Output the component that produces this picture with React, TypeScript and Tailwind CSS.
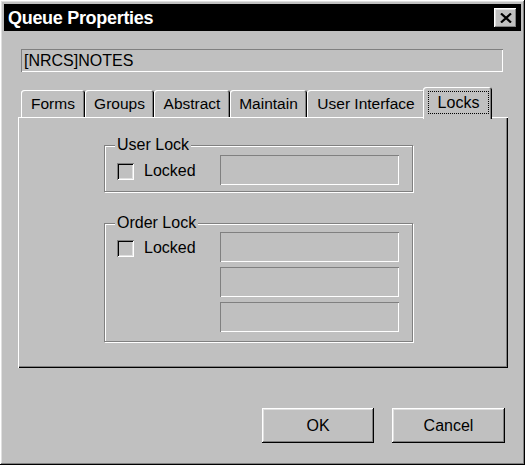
import React from 'react';

const raised =
  'shadow-[inset_-1px_-1px_0_#000,inset_1px_1px_0_#fff,inset_-2px_-2px_0_#808080,inset_2px_2px_0_#dfdfdf]';
const field = 'shadow-[inset_1px_1px_0_#808080,inset_-1px_-1px_0_#fff]';

const tabs = [
  { label: 'Forms', w: 'w-[64px]' },
  { label: 'Groups', w: 'w-[69px]' },
  { label: 'Abstract', w: 'w-[76px]' },
  { label: 'Maintain', w: 'w-[77px]' },
  { label: 'User Interface', w: 'w-[118px]' },
];

const Checkbox = () => (
  <div className="w-[17px] h-[17px] bg-[#c0c0c0] shadow-[inset_1px_1px_0_#808080,inset_-1px_-1px_0_#fff,inset_2px_2px_0_#000,inset_-2px_-2px_0_#dfdfdf]" />
);

const Field = () => <div className={`w-[179px] h-[30px] ${field}`} />;

const GroupBox: React.FC<{ title: string; fields: number; className: string }> = ({ title, fields, className }) => (
  <div className={`relative w-[309px] border border-[#808080] shadow-[inset_1px_1px_0_#fff,1px_1px_0_#fff] ${className}`}>
    <span className="absolute -top-[11px] left-[10px] px-[2px] bg-[#c0c0c0] text-[16px] leading-[20px]">{title}</span>
    <div className="flex pl-[12px]">
      <div className="w-[103px] h-[30px] flex items-center gap-[10px] pt-[2px]">
        <Checkbox />
        <span className="text-[16px] leading-none">Locked</span>
      </div>
      <div className="flex flex-col gap-[5px]">
        {Array.from({ length: fields }).map((_, i) => (
          <Field key={i} />
        ))}
      </div>
    </div>
  </div>
);

export default function App() {
  return (
    <div
      className={`w-[525px] h-[465px] bg-[#c0c0c0] p-[4px] flex flex-col text-black ${raised}`}
      style={{ fontFamily: '"Liberation Sans", Arial, sans-serif' }}
    >
      {/* title bar */}
      <div className="h-[27px] bg-black flex items-center justify-between pl-[4px] pr-[4px]">
        <span className="text-white font-bold text-[18px] tracking-[-0.3px] leading-none">Queue Properties</span>
        <div className={`w-[23px] h-[20px] bg-[#c0c0c0] flex items-center justify-center ${raised}`}>
          <svg width="12" height="10" viewBox="0 0 12 10">
            <path d="M1 0.5 L11 9.5 M11 0.5 L1 9.5" stroke="#000" strokeWidth="2.2" />
          </svg>
        </div>
      </div>

      {/* queue name */}
      <div className={`mt-[18px] ml-[17px] w-[482px] h-[23px] flex items-center pl-[3px] text-[16px] ${field}`}>
        [NRCS]NOTES
      </div>

      {/* tabs */}
      <div className="mt-[15px] ml-[14px] h-[30px] flex items-end pl-[3px]">
        {tabs.map((t) => (
          <div
            key={t.label}
            className={`${t.w} h-[27px] flex items-center justify-center text-[15.5px] rounded-t-[3px] shadow-[inset_1px_1px_0_#fff,inset_-1px_0_0_#000,inset_-2px_0_0_#808080]`}
          >
            {t.label}
          </div>
        ))}
        <div className="relative z-10 -ml-[2px] w-[69px] h-[32px] -mb-[2px] bg-[#c0c0c0] rounded-t-[3px] pl-[5px] pt-[4px] shadow-[inset_1px_1px_0_#fff,inset_-1px_0_0_#000,inset_-2px_0_0_#808080]">
          <span className="w-[61px] h-[23px] flex items-center justify-center border border-dotted border-black text-[16px]">
            Locks
          </span>
        </div>
      </div>

      {/* panel */}
      <div
        className={`ml-[14px] w-[490px] h-[251px] pt-[28px] pl-[86px] flex flex-col shadow-[inset_1px_1px_0_#fff,inset_-1px_-1px_0_#000,inset_-2px_-2px_0_#808080]`}
      >
        <GroupBox title="User Lock" fields={1} className="h-[47px] pt-[9px]" />
        <GroupBox title="Order Lock" fields={3} className="mt-[31px] h-[119px] pt-[8px]" />
      </div>

      {/* buttons */}
      <div className="mt-[40px] flex justify-end gap-[18px] pr-[16px]">
        <button className={`w-[112px] h-[35px] text-[16px] bg-[#c0c0c0] ${raised}`}>OK</button>
        <button className={`w-[113px] h-[35px] text-[16px] bg-[#c0c0c0] ${raised}`}>Cancel</button>
      </div>
    </div>
  );
}
